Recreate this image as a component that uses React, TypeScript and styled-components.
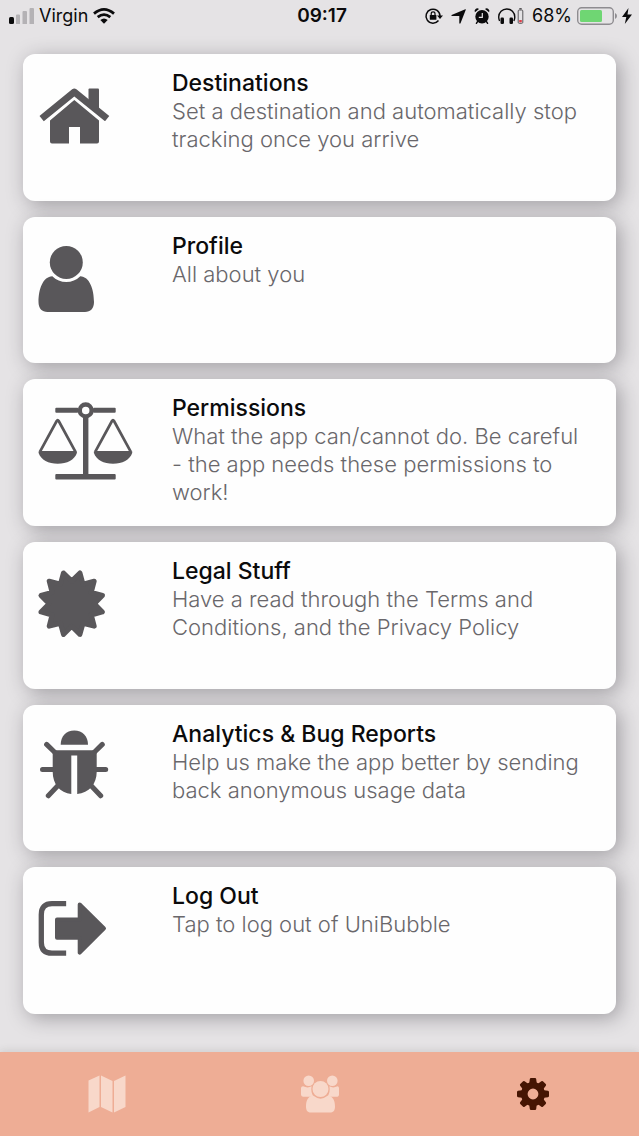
import React from "react";
import styled, { createGlobalStyle } from "styled-components";

const INK = "#59575a";

const GlobalStyle = createGlobalStyle`
  *, *::before, *::after { box-sizing: border-box; }
  body {
    margin: 0;
    background: #e5e3e5;
    font-family: Inter, "Liberation Sans", sans-serif;
    color: #0b0b0c;
  }
  button { font: inherit; color: inherit; border: 0; cursor: pointer; }
  svg { display: block; flex: none; overflow: visible; }
`;

const Screen = styled.div`
  display: flex;
  flex-direction: column;
  min-height: 100vh;
`;

const StatusBar = styled.header`
  display: grid;
  grid-template-columns: 1fr auto 1fr;
  align-items: center;
  height: 32px;
  padding: 0 7px 0 8px;
  font-size: 18px;
  line-height: 32px;
`;

const StatusGroup = styled.div<{ $end?: boolean; $gap: number }>`
  display: flex;
  align-items: center;
  justify-content: ${(p) => (p.$end ? "flex-end" : "flex-start")};
  gap: ${(p) => p.$gap}px;
`;

const Clock = styled.time`
  padding-left: 4px;
  font-size: 19px;
  font-weight: 600;
`;

const CardList = styled.main`
  flex: 1;
  display: grid;
  grid-auto-rows: 1fr;
  gap: 16px;
  padding: 22px 23px 38px;
`;

const Card = styled.button`
  display: flex;
  align-items: flex-start;
  padding: 15px 28px 15px 16px;
  border-radius: 12px;
  background: #fefefe;
  box-shadow: 4px 4px 20px rgba(40, 36, 44, 0.36);
  text-align: left;
`;

const IconSlot = styled.span`
  flex: none;
  width: 133px;
`;

const CardText = styled.span`
  flex: 1;
  min-width: 0;
  line-height: 28px;
`;

const CardTitle = styled.span`
  display: block;
  font-size: 23px;
  font-weight: 500;
`;

const CardDetail = styled.span`
  display: block;
  font-size: 22px;
  font-weight: 300;
  color: #69676b;
`;

const TabBar = styled.nav`
  display: flex;
  height: 84px;
  background: #eead95;
  box-shadow: 0 -1px 8px rgba(60, 60, 50, 0.14);
`;

const Tab = styled.button<{ $active?: boolean }>`
  flex: 1;
  display: flex;
  align-items: center;
  justify-content: center;
  padding: 0;
  background: transparent;
  color: ${(p) => (p.$active ? "#451503" : "#f8d8ca")};
`;

const CardIcon = ({ children }: { children: React.ReactNode }) => (
  <svg width="96" height="96" viewBox="0 -1 96 96" fill={INK} aria-hidden="true">
    {children}
  </svg>
);

const House = () => (
  <CardIcon>
    <path d="M50.5 18.5H59Q60 18.5 60 19.5V41L49.5 32V19.5Q49.5 18.5 50.5 18.5Z" />
    <path d="M5.300 46.400L35.300 22L65.500 46.400" fill="none" stroke={INK} strokeWidth="6.800" strokeLinecap="square" strokeLinejoin="round" />
    <path d="M35.300 30L60 50.500V71.500Q60 73.500 58 73.500H41V57H30V73.500H13Q11 73.500 11 71.500V50.500Z" />
  </CardIcon>
);

const Person = () => (
  <CardIcon>
    <circle cx="27.3" cy="29.400" r="16.500" />
    <path d="M13.300 43.200A19.600 19.600 0 0 0 41.300 43.200C50.500 43.500 55 56 55 69C55 75.500 51.500 79 46 79H8.500C3 79 -.500 75.500 -.500 69C-.500 56 4 43.500 13.300 43.200Z" />
  </CardIcon>
);

const Pan = ({ x }: { x: number }) => (
  <g transform={`translate(${x} 0)`}>
    <path d="M1 56.700L17.700 26Q18.700 24.300 19.700 26L36.400 56.700" fill="none" stroke={INK} strokeWidth="2.700" strokeLinejoin="round" />
    <path d="M.6 56H37Q38.500 56 37.900 58C35.500 65 28 68.700 18.700 68.700S2 65 -.4 58Q-1 56 .6 56Z" />
  </g>
);

const Scales = () => (
  <CardIcon>
    <rect x="16.300" y="12.800" width="23" height="5" rx="1" />
    <rect x="54" y="12.800" width="22.700" height="5" rx="1" />
    <circle cx="46.700" cy="15.400" r="5.900" fill="none" stroke={INK} strokeWidth="4.300" />
    <rect x="44" y="22" width="5.400" height="60" />
    <rect x="16.300" y="79" width="60.400" height="5.600" rx="1" />
    <Pan x={0} />
    <Pan x={55.3} />
  </CardIcon>
);

const burstPoints = Array.from({ length: 24 }, (_, i) => {
  const angle = (i * Math.PI) / 12;
  const radius = i % 2 ? 31.8 : 22.6;
  return `${32.7 + radius * Math.sin(angle)},${45.7 - radius * Math.cos(angle)}`;
}).join(" ");

const Burst = () => (
  <CardIcon>
    <polygon points={burstPoints} stroke={INK} strokeWidth="5" strokeLinejoin="round" />
  </CardIcon>
);

const Bug = () => (
  <CardIcon>
    <path d="M21.700 23.700C21.700 15 27 9.400 35.300 9.400S49 15 49 23.700Z" />
    <path d="M13.700 29.200H57.700V51C57.700 63 50 72 38.200 73V34.500H32.300V73C21 72 13.700 63 13.700 51Z" />
    <path
      d="M7.600 23.400L17 32.500M63.300 23.400L54 32.500M3.500 48.400H14M57 48.400H66.700M9.300 74.800L19 64.500M61.700 74.800L52 64.500"
      fill="none"
      stroke={INK}
      strokeWidth="5"
      strokeLinecap="round"
    />
  </CardIcon>
);

const Exit = () => (
  <CardIcon>
    <path d="M24.500 20.700H13Q2.300 20.700 2.300 31.500V59.500Q2.300 70.200 13 70.200H24.500" fill="none" stroke={INK} strokeWidth="5.300" strokeLinecap="square" strokeLinejoin="round" />
    <path d="M18 36.400H40.700V21.400L65 45.400L40.700 69.700V54.700H18Z" stroke={INK} strokeWidth="4" strokeLinejoin="round" />
  </CardIcon>
);

const MapIcon = () => (
  <svg width="38" height="38" viewBox="0 0 38 38" fill="currentColor" aria-hidden="true">
    <path d="M.5 5.500L11.500 .5V32L.5 37.500ZM13 .5L24.500 6V37.500L13 32ZM26 6L37.500 .5V32L26 37.500Z" />
  </svg>
);

const GroupIcon = () => (
  <svg width="38" height="38" viewBox="0 0 38 38" fill="currentColor" aria-hidden="true">
    <circle cx="7.700" cy="5.800" r="5.300" />
    <circle cx="31.300" cy="5.800" r="5.300" />
    <circle cx="19.500" cy="14" r="8" />
    <path d="M2 11.300Q7 13.500 10.600 11.300Q9.300 17.800 13 21.800H2Q0 21.500 0 19.500V13Q.2 11.300 2 11.300ZM36.500 11.300Q32 13.500 28.400 11.300Q29.700 17.800 26 21.800H36.500Q38 21.500 38 19.500V13Q37.800 11.300 36.500 11.300Z" />
    <path d="M12.500 20.800Q19.500 26.500 26.500 20.800C31.500 21 34 25 34 31.500C34 36 32 37.500 29 37.500H10C7 37.500 5 36 5 31.500C5 25 7.500 21 12.500 20.800Z" />
  </svg>
);

const GearIcon = () => (
  <svg width="32" height="32" viewBox="-16 -16 32 32" fill="currentColor" aria-hidden="true">
    {[0, 45, 90, 135, 180, 225, 270, 315].map((turn) => (
      <path key={turn} d="M-4 -9L-3.200 -15Q-3 -16 -2 -16H2Q3 -16 3.200 -15L4 -9Z" transform={`rotate(${turn})`} />
    ))}
    <circle r="8.700" fill="none" stroke="currentColor" strokeWidth="6.600" />
  </svg>
);

const Signal = () => (
  <svg width="26" height="16" viewBox="0 0 26 16" role="img" aria-label="Signal strength">
    <rect x="1" y="9" width="5" height="7" rx="1.500" fill="#0b0b0c" />
    <path d="M8 7.500Q8 6.500 9 6.500H11Q12 6.500 12 7.500V16H8ZM14.500 4Q14.500 3 15.500 3H18Q19 3 19 4V16H14.500ZM21.500 1Q21.500 0 22.500 0H25Q26 0 26 1V16H21.500Z" fill="#b4b2b5" />
  </svg>
);

const Wifi = () => (
  <svg width="22" height="16" viewBox="0 0 22 16" fill="none" stroke="#0b0b0c" strokeWidth="2.800" role="img" aria-label="Wi-Fi">
    <path d="M1 5.600Q11 -2.800 21 5.600M4.700 9.200Q11 4 17.300 9.200" />
    <path d="M7.300 12Q11 8.800 14.700 12L11 15.800Z" fill="#0b0b0c" stroke="none" />
  </svg>
);

const RotationLock = () => (
  <svg width="18" height="16" viewBox="0 0 18 16" fill="none" stroke="#0b0b0c" strokeWidth="1.500" aria-hidden="true">
    <path d="M13.500 12.500A7 7 0 1 1 15 8" />
    <path d="M12 7.500H18L15 11Z" fill="#0b0b0c" stroke="none" />
    <rect x="4.800" y="7" width="6.600" height="4.800" rx=".6" fill="#0b0b0c" stroke="none" />
    <path d="M6.200 7V5.800A1.900 1.900 0 0 1 10 5.800V7" strokeWidth="1.200" />
  </svg>
);

const LocationArrow = () => (
  <svg width="15" height="15" viewBox="0 0 15 15" fill="#0b0b0c" aria-hidden="true">
    <path d="M14.300 .2Q15 0 14.800 .8L9.500 14.300Q9 15 8.300 14.300V7H.8Q0 6.600 .6 6Z" />
  </svg>
);

const Alarm = () => (
  <svg width="16" height="16" viewBox="0 0 16 16" aria-hidden="true">
    <circle cx="8" cy="8.800" r="6.700" fill="#0b0b0c" />
    <path d="M.9 4.200A2.700 2.700 0 0 1 5 .9ZM15.100 4.200A2.700 2.700 0 0 0 11 .9Z" fill="#0b0b0c" />
    <path d="M3.600 13.500L2.400 15.300M12.400 13.500L13.600 15.300" stroke="#0b0b0c" strokeWidth="1.400" strokeLinecap="round" />
    <path d="M8.300 5V9.300H4.800" fill="none" stroke="#e5e3e5" strokeWidth="1.200" />
  </svg>
);

const Headphones = () => (
  <svg width="26" height="16" viewBox="0 0 26 16" aria-hidden="true">
    <path d="M1.600 13Q.7 11 .7 9A8 8 0 0 1 16.800 9Q16.800 11 15.900 13" fill="none" stroke="#0b0b0c" strokeWidth="1.400" />
    <rect x="2.500" y="9.500" width="3.500" height="6.500" rx="1.200" fill="#0b0b0c" />
    <rect x="11.500" y="9.500" width="3.500" height="6.500" rx="1.200" fill="#0b0b0c" />
    <rect x="20.200" y="2" width="4.600" height="13.300" rx="1" fill="none" stroke="#59575a" strokeWidth="1" />
    <rect x="21.300" y="0" width="2.400" height="1.500" fill="#59575a" />
    <rect x="21.200" y="12" width="2.600" height="2.300" fill="#e0404a" />
  </svg>
);

const Battery = () => (
  <svg width="40" height="18" viewBox="0 0 40 18" aria-hidden="true">
    <rect x=".7" y=".7" width="35.600" height="16.600" rx="4" fill="none" stroke="#8e8c90" strokeWidth="1.400" />
    <rect x="3" y="3" width="22" height="12" rx="1.500" fill="#6fd673" />
    <path d="M38 6Q40 7 40 9T38 12Z" fill="#8e8c90" />
  </svg>
);

const Bolt = () => (
  <svg width="10" height="16" viewBox="0 0 10 16" fill="#0b0b0c" aria-hidden="true">
    <path d="M6.500 0L0 9H4.300L2.800 16L10 6.500H5.500Z" />
  </svg>
);

const settings = [
  { title: "Destinations", detail: "Set a destination and automatically stop tracking once you arrive", Icon: House },
  { title: "Profile", detail: "All about you", Icon: Person },
  { title: "Permissions", detail: "What the app can/cannot do. Be careful - the app needs these permissions to work!", Icon: Scales },
  { title: "Legal Stuff", detail: "Have a read through the Terms and Conditions, and the Privacy Policy", Icon: Burst },
  { title: "Analytics & Bug Reports", detail: "Help us make the app better by sending back anonymous usage data", Icon: Bug },
  { title: "Log Out", detail: "Tap to log out of UniBubble", Icon: Exit },
];

export default function App() {
  return (
    <Screen>
      <GlobalStyle />
      <StatusBar>
        <StatusGroup $gap={5}>
          <Signal />
          <span>Virgin</span>
          <Wifi />
        </StatusGroup>
        <Clock>09:17</Clock>
        <StatusGroup $end $gap={8}>
          <RotationLock />
          <LocationArrow />
          <Alarm />
          <Headphones />
          <StatusGroup $gap={5}>
            <span>68%</span>
            <Battery />
            <Bolt />
          </StatusGroup>
        </StatusGroup>
      </StatusBar>
      <CardList>
        {settings.map(({ title, detail, Icon }) => (
          <Card key={title} type="button">
            <IconSlot>
              <Icon />
            </IconSlot>
            <CardText>
              <CardTitle>{title}</CardTitle>
              <CardDetail>{detail}</CardDetail>
            </CardText>
          </Card>
        ))}
      </CardList>
      <TabBar>
        <Tab type="button" aria-label="Map">
          <MapIcon />
        </Tab>
        <Tab type="button" aria-label="Friends">
          <GroupIcon />
        </Tab>
        <Tab type="button" aria-label="Settings" aria-current="page" $active>
          <GearIcon />
        </Tab>
      </TabBar>
    </Screen>
  );
}
